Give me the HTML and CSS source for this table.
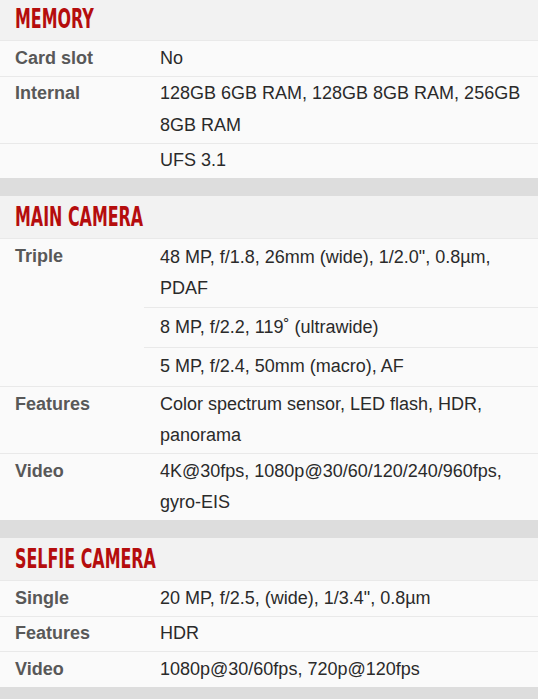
FILE: index.html
```html
<!DOCTYPE html>
<html>
<head>
<meta charset="utf-8">
<link rel="stylesheet" href="styles.css">
</head>
<body>
<div class="page">
  <section class="sec">
    <h2 class="sec-head"><span class="sec-title">MEMORY</span></h2>
    <div class="row"><div class="lbl">Card slot</div><div class="vals"><div class="val">No</div></div></div>
    <div class="row"><div class="lbl">Internal</div><div class="vals"><div class="val">128GB 6GB RAM, 128GB 8GB RAM, 256GB 8GB RAM</div></div></div>
    <div class="row"><div class="lbl"></div><div class="vals"><div class="val">UFS 3.1</div></div></div>
  </section>
  <section class="sec">
    <h2 class="sec-head"><span class="sec-title">MAIN CAMERA</span></h2>
    <div class="row multi"><div class="lbl">Triple</div><div class="vals">
      <div class="val">48 MP, f/1.8, 26mm (wide), 1/2.0", 0.8µm, PDAF</div>
      <div class="val sub">8 MP, f/2.2, 119˚ (ultrawide)</div>
      <div class="val sub">5 MP, f/2.4, 50mm (macro), AF</div>
    </div></div>
    <div class="row"><div class="lbl">Features</div><div class="vals"><div class="val">Color spectrum sensor, LED flash, HDR, panorama</div></div></div>
    <div class="row"><div class="lbl">Video</div><div class="vals"><div class="val">4K@30fps, 1080p@30/60/120/240/960fps, gyro-EIS</div></div></div>
  </section>
  <section class="sec">
    <h2 class="sec-head"><span class="sec-title">SELFIE CAMERA</span></h2>
    <div class="row"><div class="lbl">Single</div><div class="vals"><div class="val">20 MP, f/2.5, (wide), 1/3.4", 0.8µm</div></div></div>
    <div class="row"><div class="lbl">Features</div><div class="vals"><div class="val">HDR</div></div></div>
    <div class="row"><div class="lbl">Video</div><div class="vals"><div class="val">1080p@30/60fps, 720p@120fps</div></div></div>
  </section>
</div>
</body>
</html>
```
FILE: styles.css
```css
html, body {
  margin: 0;
  padding: 0;
  background: #dddddd;
}
body {
  font-family: "Liberation Sans", Arial, sans-serif;
  font-size: 18px;
}
.page {
  margin-top: -2.5px;
  display: flex;
  flex-direction: column;
  gap: 17.5px;
}
.sec {
  background: #fafafa;
}
.sec-head {
  margin: 0;
  height: 42.5px;
  background: #f2f2f2;
  display: flex;
  align-items: center;
  padding-left: 15px;
  font-weight: normal;
}
.sec-title {
  font-family: "DejaVu Sans Condensed", "Liberation Sans Narrow", sans-serif;
  font-weight: bold;
  font-size: 26px;
  color: #b50d0d;
  display: inline-block;
  transform: scaleX(0.68);
  transform-origin: left center;
  letter-spacing: 0;
  margin-top: 1px;
}
.row {
  display: grid;
  grid-template-columns: 144px 1fr;
  border-top: 1px solid #e9e9e9;
  line-height: 31.5px;
}
.lbl {
  padding: 1.5px 0 0 15px;
  font-weight: bold;
  color: #585858;
}
.vals {
  display: flex;
  flex-direction: column;
}
.val {
  padding: 1.5px 12px 1.5px 16px;
  color: #2a2a2a;
}
.multi .val {
  padding-top: 2.5px;
  padding-bottom: 2.5px;
}
.multi .val.sub {
  border-top: 1px solid #e9e9e9;
  padding-top: 3.5px;
  padding-bottom: 3.5px;
}
```
